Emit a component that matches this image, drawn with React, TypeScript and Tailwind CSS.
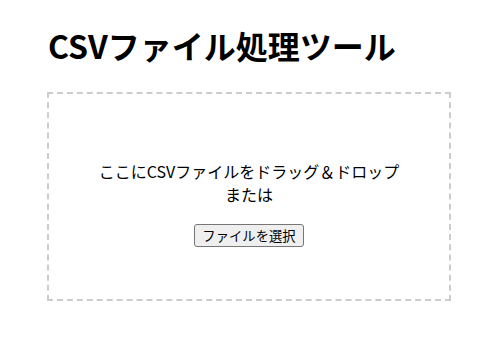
export default function App() {
  return (
    <div
      className="min-h-[344px] bg-white text-black pl-[47px] pt-[22px]"
      style={{ fontFamily: '"Noto Sans CJK JP", "Noto Sans", sans-serif' }}
    >
      <h1 className="text-[32px] font-bold leading-[1.448] mb-[24px] pl-[1px]">
        CSVファイル処理ツール
      </h1>
      <div className="w-[404px] border-2 border-dashed border-[#cccccc] px-[40px] pt-[50px] pb-[52px] text-center text-[16px] leading-[1.448]">
        <p className="my-[16px] whitespace-nowrap">
          ここにCSVファイルをドラッグ＆ドロップ
          <br />
          または
        </p>
        <button className="text-[13.333px] leading-[1.448] px-[7px] py-[1px] border border-[#767676] rounded-[3px] bg-[#efefef] text-black align-baseline">
          ファイルを選択
        </button>
      </div>
    </div>
  );
}
